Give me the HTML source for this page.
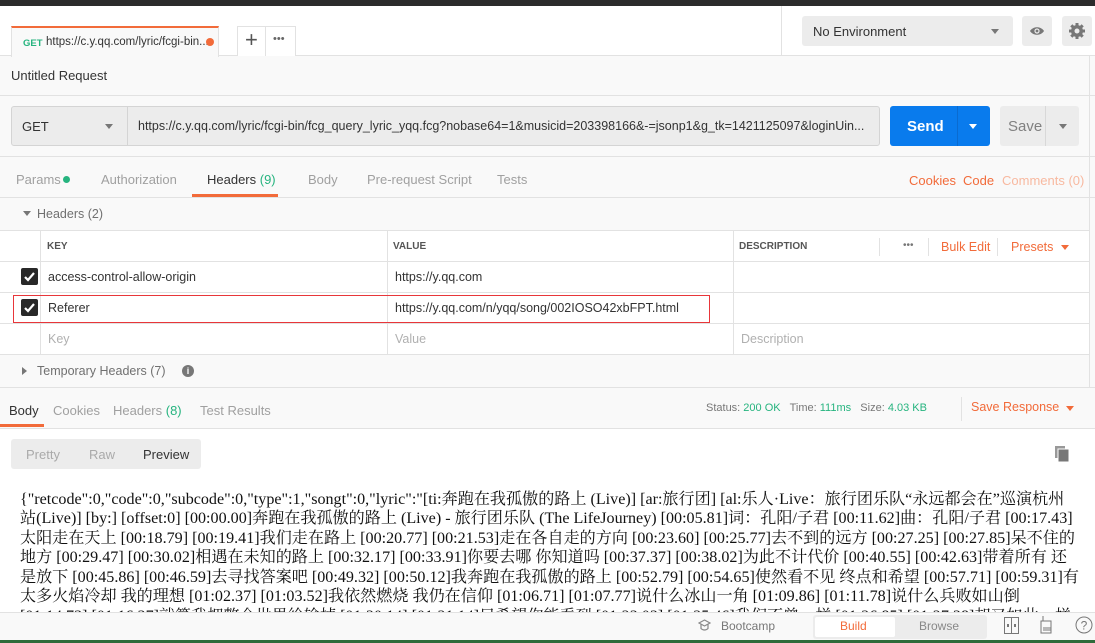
<!DOCTYPE html>
<html><head><meta charset="utf-8"><style>
*{box-sizing:border-box;margin:0;padding:0}
body{width:1095px;height:643px;overflow:hidden;background:#f9f9f9;font-family:"Liberation Sans","Noto Sans CJK SC",sans-serif;font-size:13px;color:#505050;position:relative}
.a{position:absolute}
.or{color:#f26b3a}
.gr{color:#26b47f}
.lt{color:#a0a0a0}
.hl{position:absolute;left:0;width:1095px;height:1px;background:#e2e2e2}
.cell{position:absolute;font-size:12.5px}
.cb{position:absolute;left:21px;width:17px;height:17px;background:#282828;border-radius:2px}
.cb svg{position:absolute;left:2px;top:2px}
.ln{position:absolute;left:20px;white-space:nowrap;font-family:"Liberation Serif","Noto Serif CJK SC",serif;font-size:16.1px;color:#111;letter-spacing:0}
</style></head><body>
<div class="a" style="left:0;top:0;width:1095px;height:6px;background:#2b2b2b"></div>
<div class="a" style="left:0;top:6px;width:1095px;height:50px;background:#fff;border-bottom:1px solid #e2e2e2"></div>
<div class="a" style="left:781px;top:6px;width:1px;height:50px;background:#e2e2e2"></div>
<!-- tab -->
<div class="a" style="left:11px;top:26px;width:208px;height:31px;background:#f9f9f9;border:1px solid #e2e2e2;border-top:2px solid #f26b3a;border-bottom:none"></div>
<div class="a" style="left:23px;top:38px;font-size:9.5px;font-weight:bold;color:#26b47f">GET</div>
<div class="a" style="left:46px;top:36px;font-size:11.5px;color:#333;white-space:nowrap">https://c.y.qq.com/lyric/fcgi-bin...</div>
<div class="a" style="left:206px;top:38px;width:8px;height:8px;border-radius:50%;background:#f26b3a"></div>
<div class="a" style="left:237px;top:26px;width:59px;height:30px;border:1px solid #e2e2e2;border-bottom:none;background:#fff"></div>
<div class="a" style="left:265px;top:26px;width:1px;height:30px;background:#e2e2e2"></div>
<div class="a" style="left:245px;top:27px;font-size:22px;color:#555;font-weight:300">+</div>
<div class="a" style="left:273px;top:33px;font-size:11px;color:#666;letter-spacing:0">•••</div>
<!-- env -->
<div class="a" style="left:802px;top:16px;width:211px;height:30px;background:#ececec;border-radius:3px"></div>
<div class="a" style="left:813px;top:24px;font-size:13px;color:#333">No Environment</div>
<div class="a" style="left:991px;top:29px;border:4px solid transparent;border-top:5px solid #777"></div>
<div class="a" style="left:1022px;top:16px;width:30px;height:30px;background:#ececec;border-radius:3px"></div>
<svg class="a" style="left:1029px;top:25px" width="16" height="12" viewBox="0 0 16 12"><path d="M1 6C4 1 12 1 15 6C12 11 4 11 1 6Z" fill="#777"/><circle cx="8" cy="6" r="2.6" fill="#ececec"/><circle cx="8" cy="6" r="1.4" fill="#777"/></svg>
<div class="a" style="left:1062px;top:16px;width:30px;height:30px;background:#ececec;border-radius:3px"></div>
<svg class="a" style="left:1068px;top:22px" width="18" height="18" viewBox="0 0 18 18"><g fill="#777"><circle cx="9" cy="9" r="6"/><g stroke="#777" stroke-width="3"><path d="M9 1v16M1 9h16M3.3 3.3l11.4 11.4M14.7 3.3L3.3 14.7"/></g></g><circle cx="9" cy="9" r="2.5" fill="#ececec"/></svg>
<!-- title -->
<div class="a" style="left:11px;top:68px;font-size:13px;color:#333">Untitled Request</div>
<div class="hl" style="top:95px"></div>
<!-- url row -->
<div class="a" style="left:11px;top:106px;width:869px;height:40px;background:#ececec;border:1px solid #d4d4d4;border-radius:3px"></div>
<div class="a" style="left:127px;top:107px;width:1px;height:38px;background:#d4d4d4"></div>
<div class="a" style="left:22px;top:119px;font-size:13px;color:#333">GET</div>
<div class="a" style="left:105px;top:124px;border:4px solid transparent;border-top:5px solid #777"></div>
<div class="a" style="left:138px;top:119px;font-size:12.5px;color:#333;white-space:nowrap">https://c.y.qq.com/lyric/fcgi-bin/fcg_query_lyric_yqq.fcg?nobase64=1&amp;musicid=203398166&amp;-=jsonp1&amp;g_tk=1421125097&amp;loginUin...</div>
<div class="a" style="left:890px;top:106px;width:100px;height:40px;background:#097bed;border-radius:3px"></div>
<div class="a" style="left:957px;top:106px;width:1px;height:40px;background:#0a6bd0"></div>
<div class="a" style="left:907px;top:118px;font-size:15px;font-weight:bold;color:#fff">Send</div>
<div class="a" style="left:969px;top:124px;border:4px solid transparent;border-top:5px solid #fff"></div>
<div class="a" style="left:1000px;top:106px;width:79px;height:40px;background:#ececec;border-radius:3px"></div>
<div class="a" style="left:1045px;top:106px;width:1px;height:40px;background:#d8d8d8"></div>
<div class="a" style="left:1008px;top:118px;font-size:15px;color:#808080">Save</div>
<div class="a" style="left:1059px;top:124px;border:4px solid transparent;border-top:5px solid #777"></div>
<div class="hl" style="top:156px"></div>
<!-- request tabs -->
<div class="a lt" style="left:16px;top:172px">Params</div>
<div class="a" style="left:63px;top:176px;width:7px;height:7px;border-radius:50%;background:#26b47f"></div>
<div class="a lt" style="left:101px;top:172px">Authorization</div>
<div class="a" style="left:207px;top:172px;color:#333">Headers <span class="gr">(9)</span></div>
<div class="a" style="left:192px;top:194px;width:86px;height:3px;background:#f26b3a"></div>
<div class="a lt" style="left:308px;top:172px">Body</div>
<div class="a lt" style="left:367px;top:172px">Pre-request Script</div>
<div class="a lt" style="left:497px;top:172px">Tests</div>
<div class="a or" style="left:909px;top:173px">Cookies</div>
<div class="a or" style="left:963px;top:173px">Code</div>
<div class="a" style="left:1002px;top:173px;color:#f8b9a0">Comments (0)</div>
<div class="hl" style="top:197px"></div>
<!-- headers table -->
<div class="a" style="left:23px;top:211px;border:4px solid transparent;border-top:5px solid #777"></div>
<div class="a" style="left:37px;top:207px;font-size:12.5px;color:#707070">Headers <span>(2)</span></div>
<div class="a" style="left:0;top:230px;width:1090px;height:125px;background:#fff;border-top:1px solid #e2e2e2"></div>
<div class="hl" style="top:261px;width:1090px"></div>
<div class="hl" style="top:292px;width:1090px"></div>
<div class="hl" style="top:323px;width:1090px"></div>
<div class="hl" style="top:354px;width:1090px"></div>
<div class="a" style="left:40px;top:230px;width:1px;height:124px;background:#e2e2e2"></div>
<div class="a" style="left:387px;top:230px;width:1px;height:124px;background:#e2e2e2"></div>
<div class="a" style="left:733px;top:230px;width:1px;height:124px;background:#e2e2e2"></div>
<div class="a" style="left:1089px;top:56px;width:1px;height:332px;background:#e2e2e2"></div>
<div class="cell" style="left:47px;top:241px;font-size:10px;font-weight:bold;color:#555">KEY</div>
<div class="cell" style="left:393px;top:241px;font-size:10px;font-weight:bold;color:#555">VALUE</div>
<div class="cell" style="left:739px;top:241px;font-size:10px;font-weight:bold;color:#555">DESCRIPTION</div>
<div class="a" style="left:879px;top:238px;width:1px;height:18px;background:#e2e2e2"></div>
<div class="a" style="left:928px;top:238px;width:1px;height:18px;background:#e2e2e2"></div>
<div class="a" style="left:997px;top:238px;width:1px;height:18px;background:#e2e2e2"></div>
<div class="a" style="left:903px;top:240px;font-size:10px;color:#777">•••</div>
<div class="cell or" style="left:941px;top:240px">Bulk Edit</div>
<div class="cell or" style="left:1011px;top:240px">Presets</div>
<div class="a" style="left:1061px;top:245px;border:4px solid transparent;border-top:5px solid #f26b3a"></div>
<div class="cb" style="top:268px"><svg width="13" height="13" viewBox="0 0 13 13"><path d="M2 7l3 3 6-7" stroke="#fff" stroke-width="2.2" fill="none"/></svg></div>
<div class="cell" style="left:48px;top:270px;color:#333">access-control-allow-origin</div>
<div class="cell" style="left:395px;top:270px;color:#333">https://y.qq.com</div>
<div class="cb" style="top:299px"><svg width="13" height="13" viewBox="0 0 13 13"><path d="M2 7l3 3 6-7" stroke="#fff" stroke-width="2.2" fill="none"/></svg></div>
<div class="cell" style="left:48px;top:301px;color:#333">Referer</div>
<div class="cell" style="left:395px;top:301px;color:#333">https://y.qq.com/n/yqq/song/002IOSO42xbFPT.html</div>
<div class="a" style="left:13px;top:295px;width:697px;height:28px;border:1px solid #e8363a"></div>
<div class="cell lt" style="left:48px;top:332px;color:#b0b0b0">Key</div>
<div class="cell" style="left:395px;top:332px;color:#b0b0b0">Value</div>
<div class="cell" style="left:741px;top:332px;color:#b0b0b0">Description</div>
<div class="a" style="left:22px;top:367px;border:4px solid transparent;border-left:5px solid #777"></div>
<div class="a" style="left:37px;top:364px;font-size:12.5px;color:#707070">Temporary Headers (7)</div>
<div class="a" style="left:182px;top:365px;width:12px;height:12px;border-radius:50%;background:#777;color:#fff;font-size:9px;text-align:center;line-height:12px;font-weight:bold">i</div>
<div class="hl" style="top:387px"></div>
<!-- response -->
<div class="a" style="left:9px;top:403px;color:#333">Body</div>
<div class="a" style="left:0;top:424px;width:44px;height:3px;background:#f26b3a"></div>
<div class="a lt" style="left:53px;top:403px">Cookies</div>
<div class="a lt" style="left:113px;top:403px">Headers <span class="gr">(8)</span></div>
<div class="a lt" style="left:200px;top:403px">Test Results</div>
<div class="a" style="left:706px;top:402px;font-size:11px;color:#777">Status: <span class="gr">200 OK</span> &nbsp; Time: <span class="gr">111ms</span> &nbsp; Size: <span class="gr">4.03 KB</span></div>
<div class="a" style="left:961px;top:397px;width:1px;height:24px;background:#e2e2e2"></div>
<div class="a or" style="left:971px;top:400px;font-size:12.5px">Save Response</div>
<div class="a" style="left:1066px;top:406px;border:4px solid transparent;border-top:5px solid #f26b3a"></div>
<div class="a" style="left:0;top:428px;width:1095px;height:184px;background:#fff;border-top:1px solid #e2e2e2"></div>
<div class="a" style="left:11px;top:439px;width:190px;height:30px;background:#ececec;border-radius:3px"></div>
<div class="a" style="left:26px;top:447px;color:#aaa">Pretty</div>
<div class="a" style="left:89px;top:447px;color:#aaa">Raw</div>
<div class="a" style="left:143px;top:447px;color:#333">Preview</div>
<svg class="a" style="left:1055px;top:446px" width="15" height="16" viewBox="0 0 15 16"><rect x="0" y="0" width="10" height="12" fill="#999"/><rect x="3" y="3" width="11" height="13" fill="#777" stroke="#fff" stroke-width="1"/></svg>
<div class="a" style="left:0;top:480px;width:1095px;height:132px;overflow:hidden">
<div class="ln" style="top:5px">{"retcode":0,"code":0,"subcode":0,"type":1,"songt":0,"lyric":"[ti:奔跑在我孤傲的路上 (Live)] [ar:旅行团] [al:乐人·Live：旅行团乐队“永远都会在”巡演杭州</div>
<div class="ln" style="top:24px">站(Live)] [by:] [offset:0] [00:00.00]奔跑在我孤傲的路上 (Live) - 旅行团乐队 (The LifeJourney) [00:05.81]词：孔阳/子君 [00:11.62]曲：孔阳/子君 [00:17.43]</div>
<div class="ln" style="top:44px">太阳走在天上 [00:18.79] [00:19.41]我们走在路上 [00:20.77] [00:21.53]走在各自走的方向 [00:23.60] [00:25.77]去不到的远方 [00:27.25] [00:27.85]呆不住的</div>
<div class="ln" style="top:63px">地方 [00:29.47] [00:30.02]相遇在未知的路上 [00:32.17] [00:33.91]你要去哪 你知道吗 [00:37.37] [00:38.02]为此不计代价 [00:40.55] [00:42.63]带着所有 还</div>
<div class="ln" style="top:83px">是放下 [00:45.86] [00:46.59]去寻找答案吧 [00:49.32] [00:50.12]我奔跑在我孤傲的路上 [00:52.79] [00:54.65]使然看不见 终点和希望 [00:57.71] [00:59.31]有</div>
<div class="ln" style="top:102px">太多火焰冷却 我的理想 [01:02.37] [01:03.52]我依然燃烧 我仍在信仰 [01:06.71] [01:07.77]说什么冰山一角 [01:09.86] [01:11.78]说什么兵败如山倒</div>
<div class="ln" style="top:122px">[01:14.73] [01:16.37]就算我把整个世界给输掉 [01:20.14] [01:21.14]只希望你能看到 [01:23.03] [01:25.46]我们不曾一样 [01:26.85] [01:27.38]却又如此一样</div>
</div>
<!-- bottom bar -->
<div class="a" style="left:0;top:612px;width:1095px;height:28px;background:#f9f9f9;border-top:1px solid #e2e2e2"></div>
<div class="a" style="left:0;top:640px;width:1095px;height:3px;background:#2e6b3a"></div>
<svg class="a" style="left:698px;top:619px" width="13" height="14" viewBox="0 0 13 14"><path d="M6.5 1L12 4 6.5 7 1 4Z M3 5.5v4c2 2 5 2 7 0v-4" stroke="#888" fill="none" stroke-width="1.2"/></svg>
<div class="a" style="left:721px;top:619px;font-size:12px;color:#777">Bootcamp</div>
<div class="a" style="left:813px;top:615px;width:174px;height:24px;background:#ececec;border-radius:3px"></div>
<div class="a" style="left:815px;top:617px;width:80px;height:20px;background:#fff;border-radius:2px"></div>
<div class="a or" style="left:840px;top:619px;font-size:12px">Build</div>
<div class="a" style="left:919px;top:619px;font-size:12px;color:#888">Browse</div>
<svg class="a" style="left:1004px;top:617px" width="15" height="17" viewBox="0 0 15 17"><rect x="0.5" y="0.5" width="14" height="16" stroke="#777" fill="none"/><path d="M7.5 0v17" stroke="#777"/><rect x="3" y="7" width="2" height="3" fill="#777"/><rect x="10" y="7" width="2" height="3" fill="#777"/></svg>
<svg class="a" style="left:1040px;top:616px" width="14" height="18" viewBox="0 0 14 18"><path d="M3 0v5M3 5h8v12H1V5z" stroke="#777" fill="none"/><path d="M3 12h8M3 14h8" stroke="#777"/></svg>
<svg class="a" style="left:1075px;top:616px" width="18" height="18" viewBox="0 0 18 18"><circle cx="9" cy="9" r="8" stroke="#777" fill="none"/><text x="9" y="13.5" font-size="12" text-anchor="middle" fill="#777" font-family="Liberation Sans">?</text></svg>
</body></html>
